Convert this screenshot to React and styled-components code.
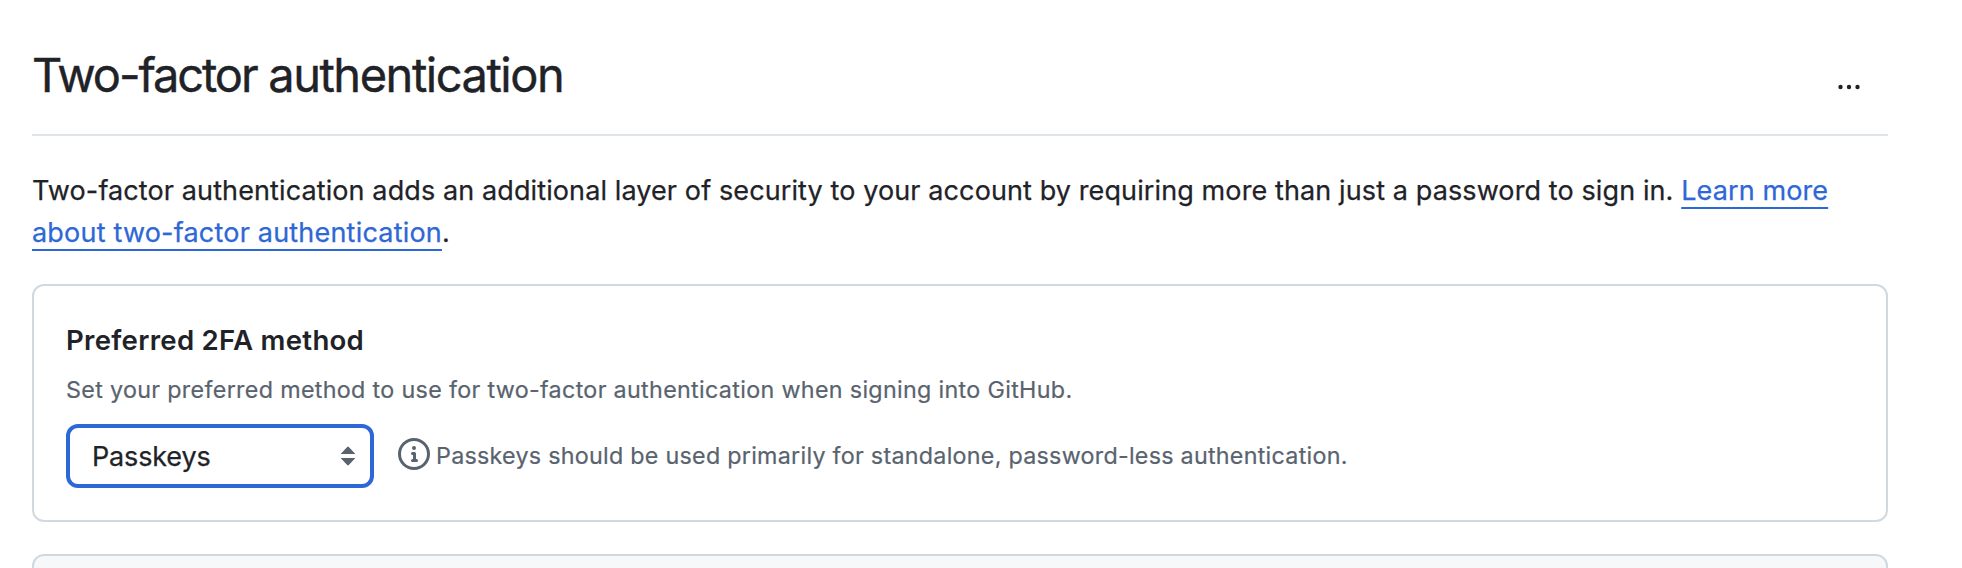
import React from 'react';
import styled, { createGlobalStyle } from 'styled-components';

const GlobalStyle = createGlobalStyle`
  * { box-sizing: border-box; }
  body {
    margin: 0;
    background: #fff;
    color: #1f2328;
    font-family: Inter, "Liberation Sans", sans-serif;
    overflow: hidden;
  }
`;

const Page = styled.main`
  height: 568px;
  padding: 40px 74px 0 32px;
  overflow: hidden;
`;

const Header = styled.header`
  display: flex;
  justify-content: space-between;
  height: 96px;
  border-bottom: 2px solid #dfe4e8;
`;

const Title = styled.h1`
  margin: 0;
  font-size: 47px;
  font-weight: 400;
  line-height: 70px;
  letter-spacing: -1.48px;
  white-space: nowrap;
  -webkit-text-stroke: 0.4px currentColor;
`;

const Tight = styled.span`
  letter-spacing: -2.1px;
`;

const MenuButton = styled.button`
  display: flex;
  align-items: center;
  justify-content: center;
  width: 78px;
  height: 64px;
  margin-top: 15px;
  padding: 0;
  border: 0;
  background: none;
  color: #1f2328;
`;

const Intro = styled.p`
  margin: 0;
  padding-top: 34px;
  font-size: 27px;
  line-height: 42px;
  letter-spacing: 0.107px;
  white-space: nowrap;
  -webkit-text-stroke: 0.25px currentColor;
`;

const Link = styled.a`
  color: #2e67d6;
  text-decoration: underline;
  text-decoration-thickness: 2px;
  text-underline-offset: 7px;
  text-decoration-skip-ink: none;
`;

const LinkTail = styled.span`
  letter-spacing: 0.2px;
`;

const Card = styled.section`
  height: 238px;
  margin-top: 30px;
  padding: 33px 32px;
  border: 2px solid #d1d9e0;
  border-radius: 12px;
`;

const NextCard = styled(Card)`
  margin-top: 32px;
  background: #f6f8fa;
`;

const CardTitle = styled.h2`
  margin: 0;
  font-size: 27.6px;
  font-weight: 600;
  line-height: 42px;
  letter-spacing: 0.27px;
`;

const Description = styled.p`
  margin: 11px 0 0;
  color: #59636e;
  font-size: 23.3px;
  line-height: 36px;
  letter-spacing: 0.32px;
  white-space: nowrap;
  -webkit-text-stroke: 0.2px currentColor;
`;

const MethodRow = styled.div`
  display: flex;
  align-items: center;
  margin-top: 16px;
`;

const SelectButton = styled.button`
  display: flex;
  align-items: center;
  justify-content: space-between;
  width: 308px;
  height: 64px;
  padding: 0 14px 0 22px;
  border: 4px solid #2e67d6;
  border-radius: 12px;
  background: #fff;
  color: #1f2328;
  font: 400 27px/40px Inter, "Liberation Sans", sans-serif;
  letter-spacing: -0.15px;
  -webkit-text-stroke: 0.25px currentColor;
`;

const SelectValue = styled.span`
  padding-top: 2px;
`;

const Note = styled.div`
  display: flex;
  align-items: center;
  gap: 6px;
  margin-left: 24px;
  color: #59636e;
  font-size: 23.3px;
  line-height: 36px;
  letter-spacing: 0.26px;
  white-space: nowrap;
  -webkit-text-stroke: 0.2px currentColor;
`;

const InfoIcon = styled.svg`
  flex: none;
  margin-top: -4px;
`;

export default function App() {
  return (
    <>
      <GlobalStyle />
      <Page>
        <Header>
          <Title><Tight>Two-factor</Tight> authentication</Title>
          <MenuButton aria-label="More options">
            <svg width="32" height="32" viewBox="0 0 16 16" fill="currentColor">
              <circle cx="3.75" cy="8" r="1.1" />
              <circle cx="8" cy="8" r="1.1" />
              <circle cx="12.25" cy="8" r="1.1" />
            </svg>
          </MenuButton>
        </Header>
        <Intro>
          Two-factor authentication adds an additional layer of security to your account by requiring more than just a password to sign in.{' '}
          <Link>Learn more<br /><LinkTail>about two-factor authentication</LinkTail></Link>.
        </Intro>
        <Card>
          <CardTitle>Preferred 2FA method</CardTitle>
          <Description>Set your preferred method to use for two-factor authentication when signing into GitHub.</Description>
          <MethodRow>
            <SelectButton>
              <SelectValue>Passkeys</SelectValue>
              <svg width="16" height="20" viewBox="0 0 16 20" fill="#59636e">
                <path d="M.6 8 7.2.9a1.1 1.1 0 0 1 1.6 0L15.4 8Z" />
                <path d="M.6 12h14.8l-6.6 7.1a1.1 1.1 0 0 1-1.6 0Z" />
              </svg>
            </SelectButton>
            <Note>
              <InfoIcon width="32" height="32" viewBox="0 0 16 16" fill="currentColor">
                <path d="M0 8a8 8 0 1 1 16 0A8 8 0 0 1 0 8Zm8-6.5a6.5 6.5 0 1 0 0 13 6.5 6.5 0 0 0 0-13ZM6.5 7.75A.75.75 0 0 1 7.25 7h1a.75.75 0 0 1 .75.75v2.75h.25a.75.75 0 0 1 0 1.5h-2a.75.75 0 0 1 0-1.5h.25v-2h-.25a.75.75 0 0 1-.75-.75ZM8 6a1 1 0 1 1 0-2 1 1 0 0 1 0 2Z" />
              </InfoIcon>
              <span>Passkeys should be used primarily for standalone, password-less authentication.</span>
            </Note>
          </MethodRow>
        </Card>
        <NextCard />
      </Page>
    </>
  );
}
